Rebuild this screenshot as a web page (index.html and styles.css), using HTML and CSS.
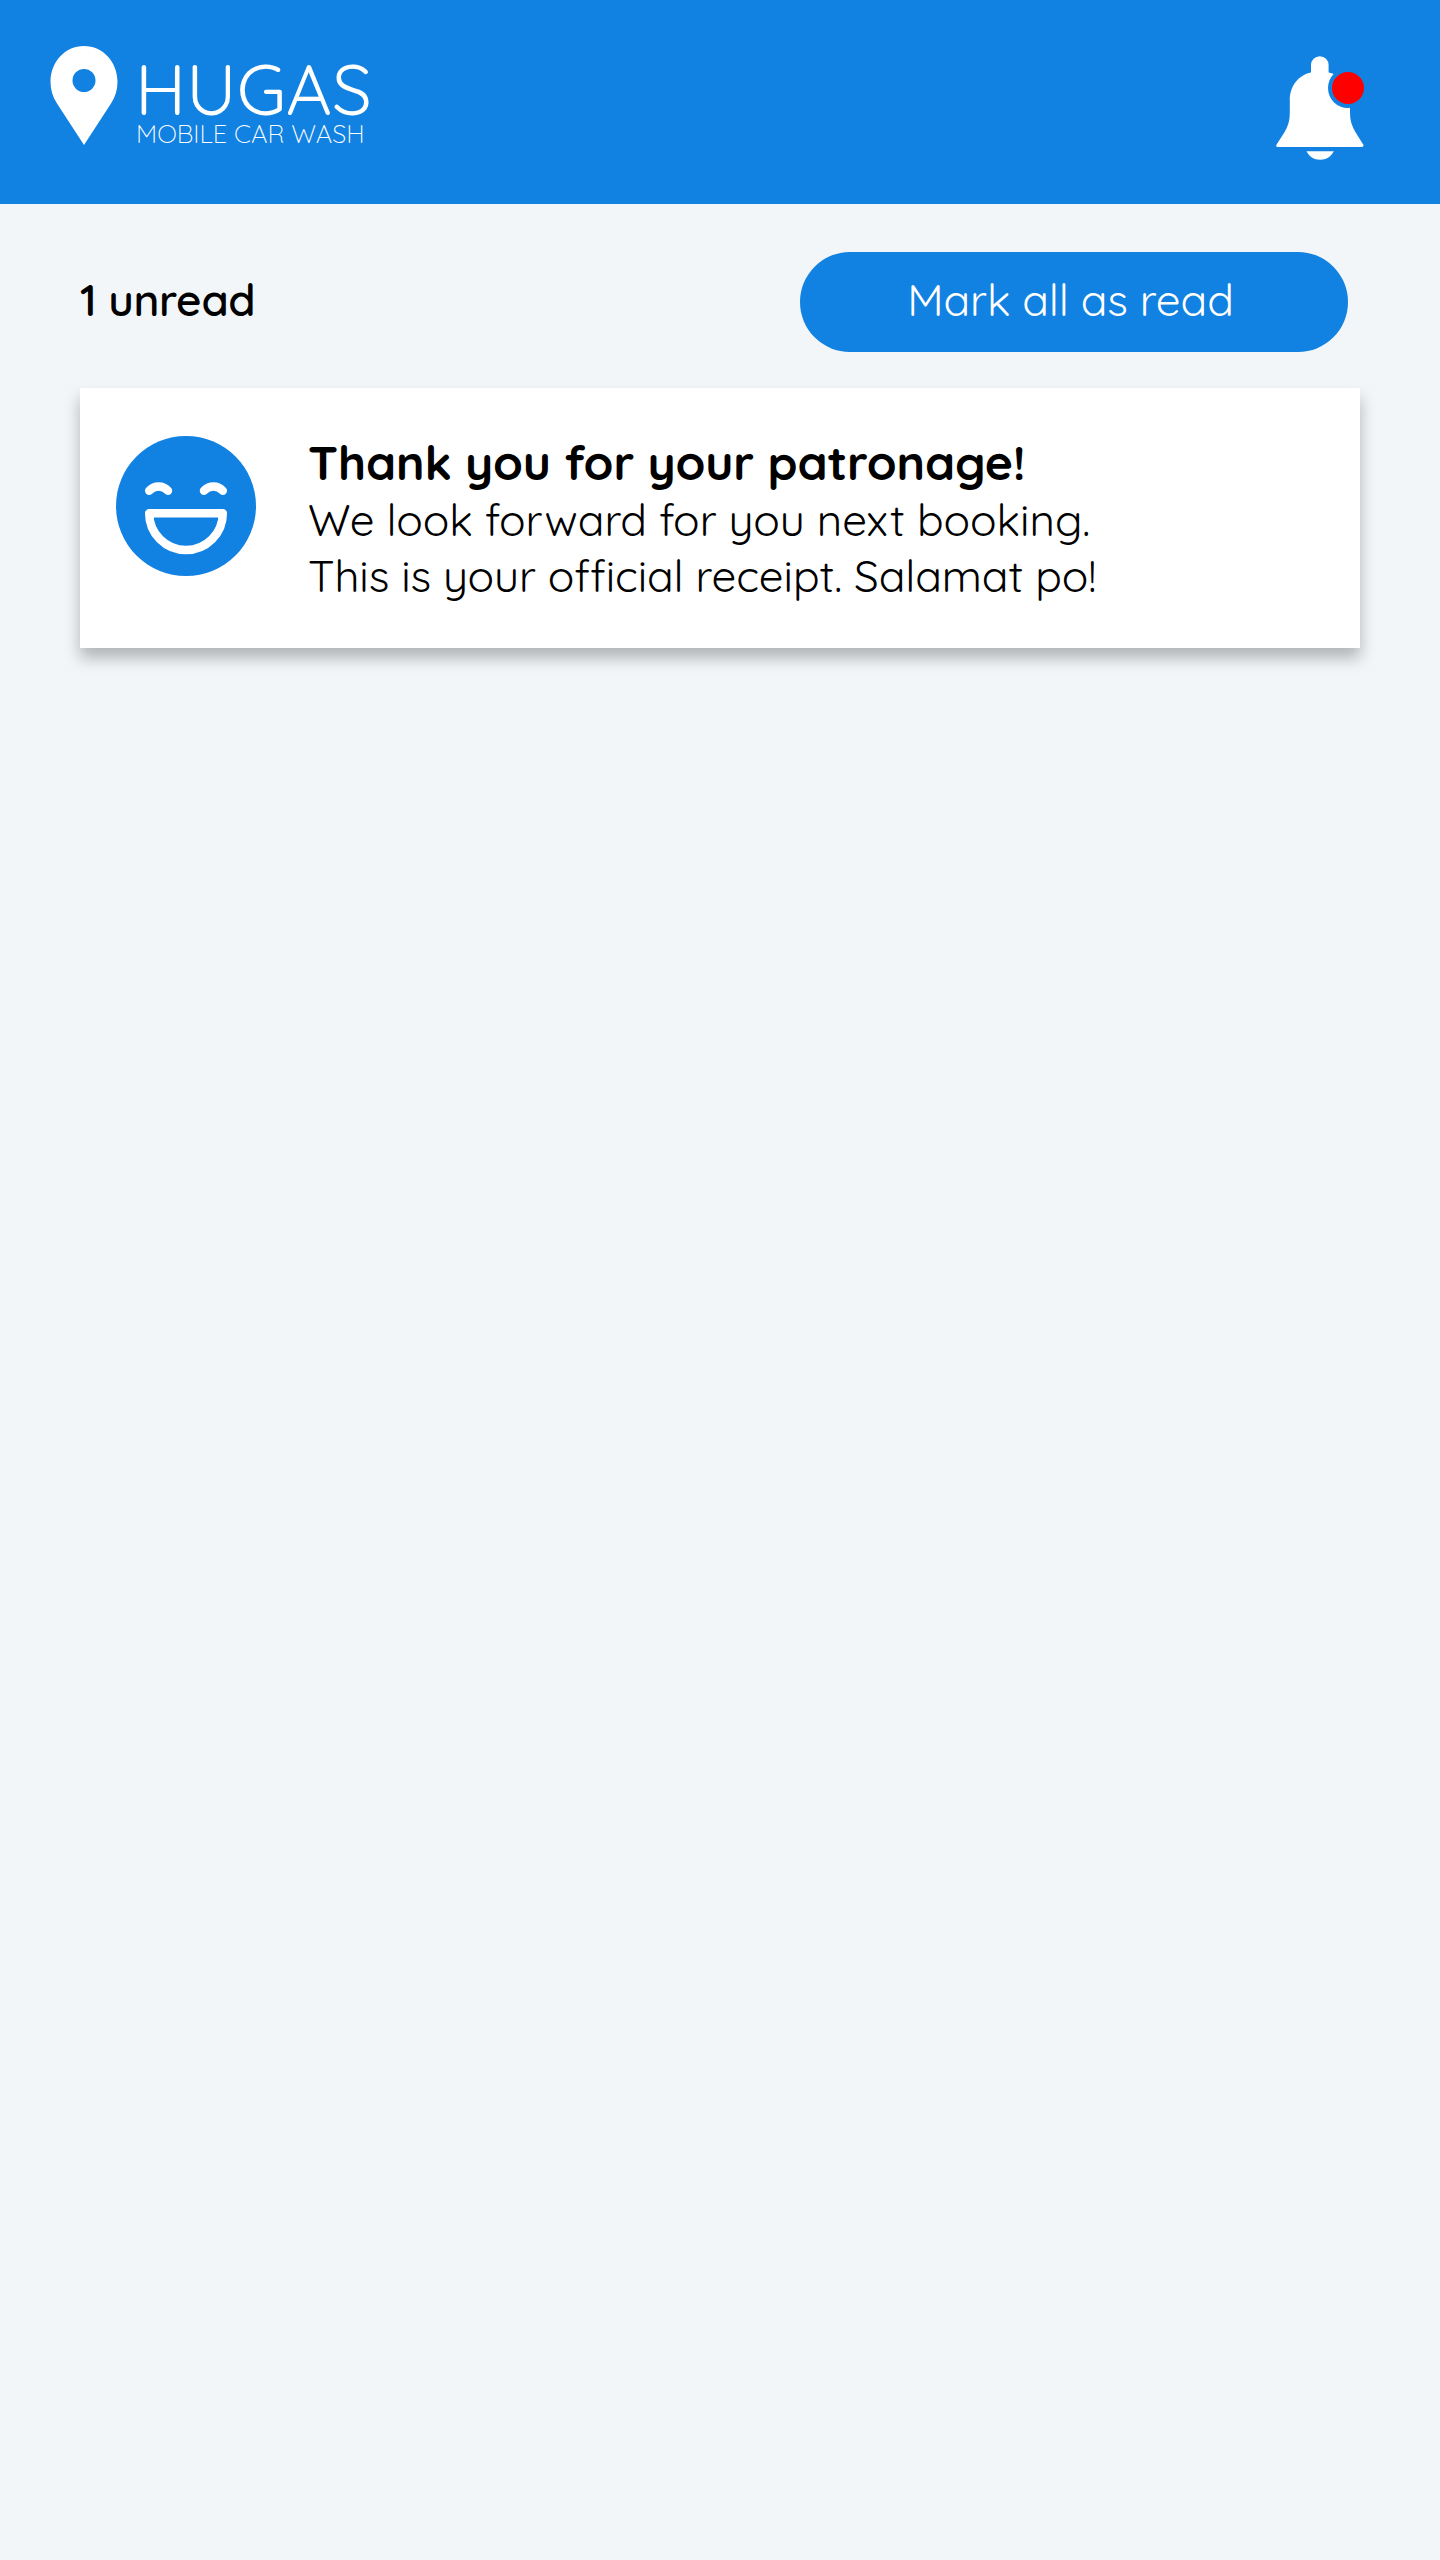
FILE: index.html
```html
<!DOCTYPE html>
<html lang="en">
<head>
<meta charset="utf-8">
<title>Hugas notifications</title>
<link rel="stylesheet" href="styles.css">
</head>
<body>
<header class="header">
  <div class="brand">
    <svg class="pin" viewBox="0 0 68 99" width="68" height="99" aria-hidden="true"><path fill="#fff" fill-rule="evenodd" d="M34 0C15 0 .5 16 .5 36c0 8 2.200 15 6.500 21.500L34 99l27-41.500C65.300 51 67.500 44 67.500 36 67.500 16 53 0 34 0ZM34 23a11.500 11.500 0 1 1 0 23 11.500 11.500 0 0 1 0-23Z"/></svg>
    <div class="wordmark">
      <span class="name">HUGAS</span>
      <span class="tagline">MOBILE CAR WASH</span>
    </div>
  </div>
  <svg class="bell" viewBox="0 0 88 105" width="88" height="105" aria-label="Notifications">
    <path fill="#fff" d="M35 16.500V9a8.800 8.800 0 0 1 17.600 0v7.500C65 19 74 30 74 44v12c0 9 2 14.500 6 21l7.200 11.600c.9 1.300 0 2.400-1.500 2.400H2C.5 91-.3 89.900.6 88.600L8 77c4-6.500 5.800-12 5.800-21V44C13.800 30 22.500 19 35 16.500Z"/>
    <path fill="#fff" d="M30.500 95.300h27.300c-2.500 5-7.500 8.500-13.700 8.500s-11.100-3.500-13.600-8.500Z"/>
    <circle cx="72" cy="32" r="20" fill="#1181e2"/>
    <circle cx="72" cy="32" r="16" fill="#f00"/>
  </svg>
</header>
<main>
  <div class="toolbar">
    <span class="unread">1 unread</span>
    <button class="mark">Mark all as read</button>
  </div>
  <article class="card">
    <svg class="smile" viewBox="0 0 140 140" width="140" height="140" aria-hidden="true">
      <circle cx="70" cy="70" r="70" fill="#1181e2"/>
      <g fill="none" stroke="#fff" stroke-width="8.500" stroke-linecap="round" stroke-linejoin="round">
        <path d="M33.200 54.700a12.500 12.500 0 0 1 18.800 0M88 54.700a12.500 12.500 0 0 1 18.800 0M33.200 77.300h73.600a36.800 36.800 0 0 1-73.600 0Z"/>
      </g>
    </svg>
    <div class="message">
      <h1 class="title">Thank you for your patronage!</h1>
      <p class="line">We look forward for you next booking.</p>
      <p class="line receipt">This is your official receipt. Salamat po!</p>
    </div>
  </article>
</main>
</body>
</html>
```
FILE: styles.css
```css
* { box-sizing: border-box; }
body {
  margin: 0;
  min-height: 2560px;
  background: #f2f6f9;
  color: #000;
  font-family: Quicksand, Lato, "Open Sans", sans-serif;
  font-size: 44px;
  font-weight: 400;
  white-space: nowrap;
}
.header {
  height: 204px;
  padding: 46px 76px 0 50px;
  display: flex;
  justify-content: space-between;
  background: #1181e2;
  color: #fff;
}
.brand { display: flex; gap: 17px; }
.pin { display: block; }
.bell { display: block; margin-top: 10px; }
.wordmark { display: flex; flex-direction: column; padding-top: 11px; }
.name { font-size: 71px; line-height: 63px; }
.tagline { font-size: 25.5px; line-height: 26px; font-weight: 300; margin-left: 1px; }
.toolbar {
  display: flex;
  justify-content: space-between;
  align-items: center;
  padding: 48px 92px 36px 80px;
}
.unread { padding-bottom: 5px; font-weight: 600; letter-spacing: -0.4px; }
.mark {
  width: 548px;
  height: 100px;
  border: 0;
  border-radius: 50px;
  padding: 0 7px 5px 0;
  background: #1181e2;
  color: #fff;
  font: inherit;
  letter-spacing: -0.1px;
}
.card {
  display: flex;
  gap: 52px;
  width: 1280px;
  height: 260px;
  margin-left: 80px;
  padding: 48px 36px 0;
  background: #fff;
  box-shadow: 0 10px 15px rgba(0, 0, 0, 0.27);
}
.smile { display: block; flex: none; }
.title { margin: 0 0 4px; font-size: 48px; line-height: 52px; font-weight: 700; letter-spacing: -0.1px; }
.line { margin: 0; line-height: 56px; letter-spacing: -0.04px; }
.receipt { letter-spacing: -0.1px; }
```
